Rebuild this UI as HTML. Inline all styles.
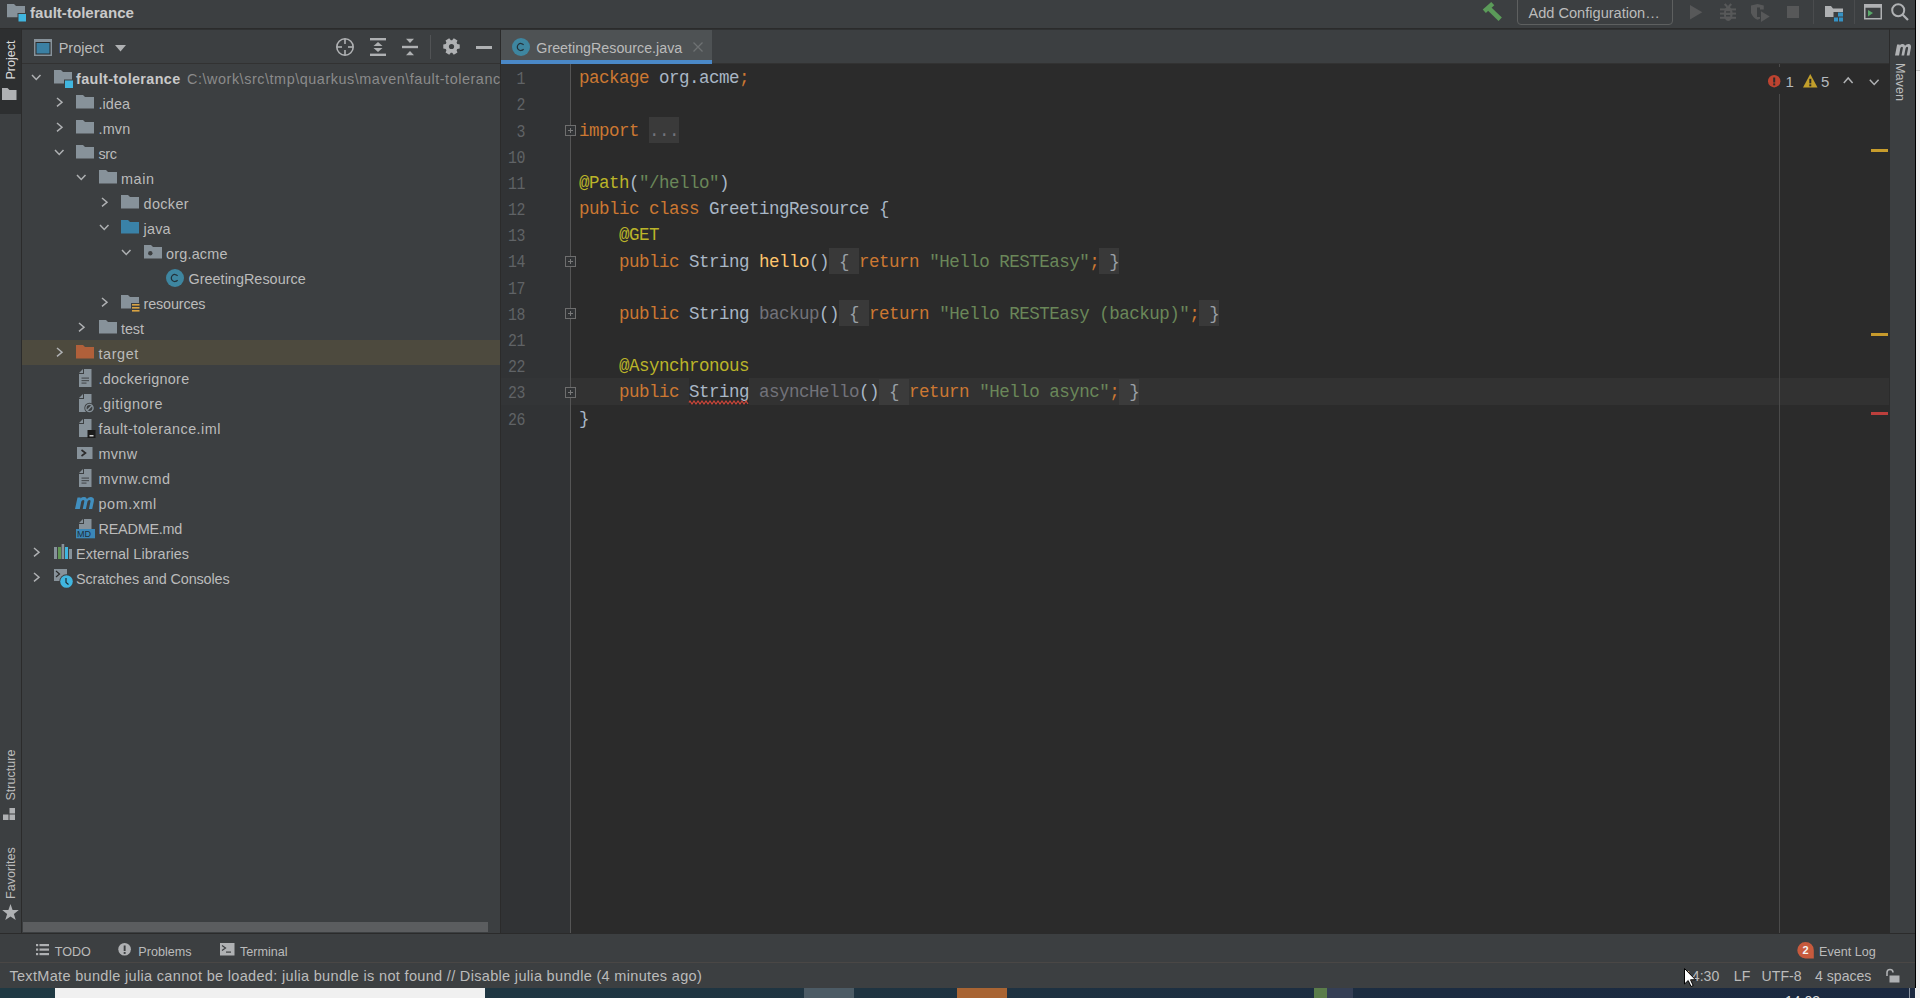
<!DOCTYPE html>
<html><head><meta charset="utf-8"><style>
*{margin:0;padding:0;box-sizing:border-box}
html,body{width:1920px;height:998px;overflow:hidden;background:#f0f0f0}
body{position:relative;font-family:"Liberation Sans",sans-serif;color:#bbbbbb}
.a{position:absolute}
.t{position:absolute;white-space:pre;line-height:1}
svg{position:absolute;overflow:visible}
.kw{color:#cc7832}.df{color:#a9b7c6}.st{color:#6a8759}.an{color:#bbb529}.md{color:#ffc66d}.un{color:#72737a}
.fb{color:#9aa0a6}
</style></head>
<body>
<div class="a" style="left:0px;top:0px;width:1915px;height:988px;background:#3c3f41;"></div>
<div class="a" style="left:1915px;top:0px;width:1px;height:988px;background:#000;"></div>
<div class="a" style="left:1916px;top:0px;width:4px;height:998px;background:#f0f0f0;"></div>
<div class="a" style="left:1916px;top:70px;width:4px;height:1px;background:#c8c8c8;"></div>
<div class="a" style="left:0px;top:988px;width:1915px;height:10px;background:linear-gradient(90deg,#1f3943 0%,#1f3441 45%,#1c2c41 75%,#1b2940 100%);"></div>
<div class="a" style="left:55px;top:988px;width:430px;height:10px;background:#f0f0f0;"></div>
<div class="a" style="left:804px;top:988px;width:50px;height:10px;background:#4c5b65;"></div>
<div class="a" style="left:957px;top:988px;width:50px;height:10px;background:#a86433;"></div>
<div class="a" style="left:1314px;top:988px;width:13px;height:10px;background:#5a7c4a;"></div>
<div class="a" style="left:1327px;top:988px;width:26px;height:10px;background:#353f55;"></div>
<div class="a" style="left:1909px;top:988px;width:1px;height:10px;background:#8a93a0;"></div>
<div class="t" style="left:1785.00px;top:994.15px;font-size:14px;color:#e0e0e0;font-family:'Liberation Sans',sans-serif;">14:03</div>
<div class="a" style="left:0px;top:28px;width:1915px;height:1px;background:#2b2b2b;"></div>
<div class="a" style="left:22px;top:29px;width:1893px;height:1px;background:#2f3132;"></div>
<svg style="left:7px;top:4.4px;" width="20" height="18" viewBox="0 0 20 18"><path d="M0,0 H7 L9,2 H18 V13.3 H0 Z" fill="#87929a"/><rect x="10.5" y="9" width="9" height="9" fill="#3c3f41"/><rect x="11.5" y="10" width="7.5" height="7.5" fill="#40b6e0"/></svg>
<div class="t" style="left:30.00px;top:5.12px;font-size:15.1px;color:#c9c9c9;font-family:'Liberation Sans',sans-serif;font-weight:bold">fault-tolerance</div>
<svg style="left:1478px;top:0px;" width="30" height="24" viewBox="0 0 30 24"><path d="M6.3,11.2 L14.8,3.6" stroke="#5b9b59" stroke-width="4.6"/><path d="M10.2,7.6 L22.2,19.3" stroke="#5b9b59" stroke-width="4.8"/></svg>
<div class="a" style="left:1516.5px;top:-4px;width:156px;height:29px;background:transparent;border:1px solid #5e6060;border-radius:4px"></div>
<div class="t" style="left:1528.50px;top:5.86px;font-size:14.58px;color:#bbbbbb;font-family:'Liberation Sans',sans-serif;">Add Configuration…</div>
<svg style="left:1690px;top:4.75px;" width="13" height="15" viewBox="0 0 13 15"><path d="M0,0 L12.3,7.3 L0,14.6 Z" fill="#575859"/></svg>
<svg style="left:1715px;top:0px;" width="24" height="24" viewBox="0 0 24 24"><g fill="#575859"><path d="M9.7,4 L12.5,7 M16.25,4 L13.5,7" stroke="#575859" stroke-width="2"/><ellipse cx="13.25" cy="13.8" rx="4.4" ry="7.2"/><rect x="5" y="8.4" width="16" height="2"/><rect x="5" y="12.6" width="16" height="2"/><rect x="5" y="16.8" width="16" height="2"/></g><rect x="11" y="11.2" width="4.2" height="1.5" fill="#3c3f41"/><rect x="11" y="15" width="4.2" height="1.5" fill="#3c3f41"/></svg>
<svg style="left:1750px;top:0px;" width="22" height="24" viewBox="0 0 22 24"><path d="M1,5.5 L7.5,4 L13.75,5.5 V9.5 H10 V7.5 H7 V17 H10 V18.8 L7.5,19.7 Q3,18 1,13 Z" fill="#575859"/><path d="M11,11.25 L19.7,16.6 L11,21.9 Z" fill="#575859"/></svg>
<div class="a" style="left:1787px;top:5.6px;width:12px;height:12.5px;background:#575859;"></div>
<div class="a" style="left:1813px;top:0px;width:1px;height:24px;background:#4a4c4e;"></div>
<svg style="left:1825px;top:5.6px;" width="18" height="16" viewBox="0 0 18 16"><path d="M0,0 H6 L8,2.5 H18 V11 H0 Z" fill="#afb1b3"/><rect x="8.5" y="6" width="9.5" height="10" fill="#3c3f41"/><g fill="#3592c4"><rect x="13" y="6.5" width="5" height="4"/><rect x="9" y="11.5" width="4" height="4"/><rect x="14" y="11.5" width="4" height="4"/></g></svg>
<div class="a" style="left:1854px;top:0px;width:1px;height:24px;background:#4a4c4e;"></div>
<svg style="left:1864px;top:4.4px;" width="18" height="16" viewBox="0 0 18 16"><rect x="0.75" y="0.75" width="16.5" height="14" fill="none" stroke="#afb1b3" stroke-width="1.5"/><rect x="0.75" y="0.75" width="16.5" height="3" fill="#afb1b3"/><path d="M4,6 L9,9 L4,12.5 Z" fill="#59a869"/></svg>
<svg style="left:1891px;top:2.75px;" width="19" height="18" viewBox="0 0 19 18"><circle cx="7.2" cy="7.2" r="6" fill="none" stroke="#afb1b3" stroke-width="2"/><path d="M11.5,11.5 L17,17" stroke="#afb1b3" stroke-width="2.2"/></svg>
<div class="a" style="left:21px;top:29px;width:1px;height:905px;background:#2b2b2b;"></div>
<div class="a" style="left:0px;top:29px;width:21px;height:85px;background:#2d2f30;"></div>
<div class="t" style="left:10.5px;top:60.2px;font-size:12.6px;color:#d8d8d8;transform:translate(-50%,-50%) rotate(-90deg)">Project</div>
<svg style="left:2px;top:87.5px;" width="15" height="12" viewBox="0 0 15 12"><path d="M0,0 H5.5 L7.5,2 H14.5 V12 H0 Z" fill="#afb1b3"/></svg>
<div class="t" style="left:10.9px;top:774.5px;font-size:12.6px;color:#bbbbbb;transform:translate(-50%,-50%) rotate(-90deg)">Structure</div>
<svg style="left:3.4px;top:807.6px;" width="13" height="12" viewBox="0 0 13 12"><g fill="#afb1b3"><rect x="6.5" y="0" width="5.5" height="5.5"/><rect x="0" y="6.5" width="5.5" height="5.5"/><rect x="6.5" y="6.5" width="5.5" height="5.5"/></g></svg>
<div class="t" style="left:10.9px;top:872.8px;font-size:12.6px;color:#bbbbbb;transform:translate(-50%,-50%) rotate(-90deg)">Favorites</div>
<svg style="left:1.5px;top:903.7px;" width="17" height="17" viewBox="0 0 17 17"><path d="M8.5,0 L10.6,5.9 L16.8,6.1 L11.9,9.9 L13.7,16 L8.5,12.4 L3.3,16 L5.1,9.9 L0.2,6.1 L6.4,5.9 Z" fill="#afb1b3"/></svg>
<div class="a" style="left:22px;top:63px;width:478px;height:1px;background:#323232;"></div>
<svg style="left:34px;top:39.3px;" width="18" height="17" viewBox="0 0 18 17"><rect x="0" y="0" width="18" height="17" fill="#87929a"/><rect x="1.5" y="3" width="15" height="12.5" fill="#2b2b2b"/><rect x="2.5" y="4" width="13" height="10.5" fill="#3b80a3"/></svg>
<div class="t" style="left:58.70px;top:40.53px;font-size:14.5px;color:#bbbbbb;font-family:'Liberation Sans',sans-serif;">Project</div>
<svg style="left:114.5px;top:45.1px;" width="11" height="7" viewBox="0 0 11 7"><path d="M0,0 H11 L5.5,6.6 Z" fill="#afb1b3"/></svg>
<svg style="left:336px;top:38px;" width="18" height="18" viewBox="0 0 18 18"><circle cx="9" cy="9" r="8.2" fill="none" stroke="#afb1b3" stroke-width="1.6"/><g stroke="#afb1b3" stroke-width="1.6"><path d="M9,1 V6"/><path d="M9,12 V17"/><path d="M1,9 H6"/><path d="M12,9 H17"/></g></svg>
<svg style="left:370px;top:38px;" width="16" height="18" viewBox="0 0 16 18"><g fill="#afb1b3"><rect x="0" y="0" width="16" height="2.4"/><rect x="0" y="15.6" width="16" height="2.4"/><path d="M3.5,8 L8,4 L12.5,8 Z"/><path d="M3.5,10 L8,14 L12.5,10 Z"/></g></svg>
<svg style="left:402px;top:38px;" width="16" height="18" viewBox="0 0 16 18"><g fill="#afb1b3"><rect x="0" y="7.8" width="16" height="2.4"/><path d="M4,0.8 H12 L8,5 Z"/><path d="M4,17.2 H12 L8,13 Z"/></g></svg>
<div class="a" style="left:430px;top:35px;width:1px;height:24px;background:#515355;"></div>
<svg style="left:442.5px;top:38px;" width="17" height="17" viewBox="0 0 17 17"><path d="M14.25,5.93 L16.73,6.38 L16.73,10.62 L14.25,11.07 L13.60,12.20 L14.45,14.57 L10.78,16.69 L9.15,14.77 L7.85,14.77 L6.22,16.69 L2.55,14.57 L3.40,12.20 L2.75,11.07 L0.27,10.62 L0.27,6.38 L2.75,5.93 L3.40,4.80 L2.55,2.43 L6.22,0.31 L7.85,2.23 L9.15,2.23 L10.78,0.31 L14.45,2.43 L13.60,4.80 Z" fill="#afb1b3"/><circle cx="8.5" cy="8.5" r="2.6" fill="#3c3f41"/></svg>
<div class="a" style="left:476px;top:45.5px;width:16px;height:3px;background:#afb1b3;"></div>
<svg style="left:31.25px;top:73.5px;" width="11" height="7" viewBox="0 0 11 7"><path d="M1,1 L5.25,5.5 L9.5,1" fill="none" stroke="#afb1b3" stroke-width="1.5"/></svg>
<svg style="left:54.0px;top:69.6px;" width="20" height="18" viewBox="0 0 20 18"><path d="M0,0 H7 L9,2 H18 V13.5 H0 Z" fill="#87929a"/><rect x="10" y="9.5" width="10" height="9" fill="#3c3f41"/><rect x="11" y="10.5" width="8" height="7.5" fill="#40b6e0"/></svg>
<div class="t" style="left:76.00px;top:71.91px;font-size:14.4px;color:#c9c9c9;font-family:'Liberation Sans',sans-serif;font-weight:bold;letter-spacing:0.36px">fault-tolerance</div>
<div class="a" style="left:187px;top:65.00px;width:313px;height:25px;overflow:hidden">
<div class="t" style="left:0.00px;top:6.91px;font-size:14.4px;color:#8b8b8b;font-family:'Liberation Sans',sans-serif;letter-spacing:0.55px">C:\work\src\tmp\quarkus\maven\fault-tolerance</div>
</div>
<svg style="left:55.5px;top:96.5px;" width="8" height="11" viewBox="0 0 8 11"><path d="M1,1 L6,5.2 L1,9.4" fill="none" stroke="#afb1b3" stroke-width="1.5"/></svg>
<svg style="left:76.0px;top:95px;" width="18" height="14" viewBox="0 0 18 14"><path d="M0,0 H7 L9,2 H18 V13.5 H0 Z" fill="#87929a"/></svg>
<div class="t" style="left:98.50px;top:96.91px;font-size:14.4px;color:#bbbbbb;font-family:'Liberation Sans',sans-serif;letter-spacing:0.07px">.idea</div>
<svg style="left:55.5px;top:121.5px;" width="8" height="11" viewBox="0 0 8 11"><path d="M1,1 L6,5.2 L1,9.4" fill="none" stroke="#afb1b3" stroke-width="1.5"/></svg>
<svg style="left:76.0px;top:120px;" width="18" height="14" viewBox="0 0 18 14"><path d="M0,0 H7 L9,2 H18 V13.5 H0 Z" fill="#87929a"/></svg>
<div class="t" style="left:98.50px;top:121.91px;font-size:14.4px;color:#bbbbbb;font-family:'Liberation Sans',sans-serif;letter-spacing:0.17px">.mvn</div>
<svg style="left:53.75px;top:148.5px;" width="11" height="7" viewBox="0 0 11 7"><path d="M1,1 L5.25,5.5 L9.5,1" fill="none" stroke="#afb1b3" stroke-width="1.5"/></svg>
<svg style="left:76.0px;top:145px;" width="18" height="14" viewBox="0 0 18 14"><path d="M0,0 H7 L9,2 H18 V13.5 H0 Z" fill="#87929a"/></svg>
<div class="t" style="left:98.50px;top:146.91px;font-size:14.4px;color:#bbbbbb;font-family:'Liberation Sans',sans-serif;letter-spacing:-0.40px">src</div>
<svg style="left:76.25px;top:173.5px;" width="11" height="7" viewBox="0 0 11 7"><path d="M1,1 L5.25,5.5 L9.5,1" fill="none" stroke="#afb1b3" stroke-width="1.5"/></svg>
<svg style="left:98.5px;top:170px;" width="18" height="14" viewBox="0 0 18 14"><path d="M0,0 H7 L9,2 H18 V13.5 H0 Z" fill="#87929a"/></svg>
<div class="t" style="left:121.00px;top:171.91px;font-size:14.4px;color:#bbbbbb;font-family:'Liberation Sans',sans-serif;letter-spacing:0.57px">main</div>
<svg style="left:100.5px;top:196.5px;" width="8" height="11" viewBox="0 0 8 11"><path d="M1,1 L6,5.2 L1,9.4" fill="none" stroke="#afb1b3" stroke-width="1.5"/></svg>
<svg style="left:121.0px;top:195px;" width="18" height="14" viewBox="0 0 18 14"><path d="M0,0 H7 L9,2 H18 V13.5 H0 Z" fill="#87929a"/></svg>
<div class="t" style="left:143.50px;top:196.91px;font-size:14.4px;color:#bbbbbb;font-family:'Liberation Sans',sans-serif;letter-spacing:0.38px">docker</div>
<svg style="left:98.75px;top:223.5px;" width="11" height="7" viewBox="0 0 11 7"><path d="M1,1 L5.25,5.5 L9.5,1" fill="none" stroke="#afb1b3" stroke-width="1.5"/></svg>
<svg style="left:121.0px;top:220px;" width="18" height="14" viewBox="0 0 18 14"><path d="M0,0 H7 L9,2 H18 V13.5 H0 Z" fill="#3a82a8"/></svg>
<div class="t" style="left:143.50px;top:221.91px;font-size:14.4px;color:#bbbbbb;font-family:'Liberation Sans',sans-serif;letter-spacing:0.23px">java</div>
<svg style="left:121.25px;top:248.5px;" width="11" height="7" viewBox="0 0 11 7"><path d="M1,1 L5.25,5.5 L9.5,1" fill="none" stroke="#afb1b3" stroke-width="1.5"/></svg>
<svg style="left:143.5px;top:245px;" width="18" height="14" viewBox="0 0 18 14"><path d="M0,0 H7 L9,2 H18 V13.5 H0 Z" fill="#87929a"/><circle cx="6.3" cy="8.2" r="2.2" fill="#3c3f41"/></svg>
<div class="t" style="left:166.00px;top:246.91px;font-size:14.4px;color:#bbbbbb;font-family:'Liberation Sans',sans-serif;letter-spacing:0.21px">org.acme</div>
<svg style="left:165.9px;top:268.9px;" width="18" height="18" viewBox="0 0 18 18"><circle cx="9" cy="9" r="9" fill="#3e86a0"/><path d="M11.6,6.9 A3.5,3.5 0 1 0 11.6,11.1" fill="none" stroke="#23323a" stroke-width="1.25"/></svg>
<div class="t" style="left:188.50px;top:271.91px;font-size:14.4px;color:#bbbbbb;font-family:'Liberation Sans',sans-serif;letter-spacing:0.03px">GreetingResource</div>
<svg style="left:100.5px;top:296.5px;" width="8" height="11" viewBox="0 0 8 11"><path d="M1,1 L6,5.2 L1,9.4" fill="none" stroke="#afb1b3" stroke-width="1.5"/></svg>
<svg style="left:121.0px;top:295px;" width="18" height="14" viewBox="0 0 18 14"><path d="M0,0 H7 L9,2 H18 V13.5 H0 Z" fill="#87929a"/><rect x="10" y="8" width="10" height="10" fill="#3c3f41"/><g fill="#d9a343"><rect x="11" y="9" width="7.5" height="1.6"/><rect x="11" y="12" width="7.5" height="1.6"/><rect x="11" y="15" width="7.5" height="1.6"/></g></svg>
<div class="t" style="left:143.50px;top:296.91px;font-size:14.4px;color:#bbbbbb;font-family:'Liberation Sans',sans-serif;letter-spacing:-0.14px">resources</div>
<svg style="left:78.0px;top:321.5px;" width="8" height="11" viewBox="0 0 8 11"><path d="M1,1 L6,5.2 L1,9.4" fill="none" stroke="#afb1b3" stroke-width="1.5"/></svg>
<svg style="left:98.5px;top:320px;" width="18" height="14" viewBox="0 0 18 14"><path d="M0,0 H7 L9,2 H18 V13.5 H0 Z" fill="#87929a"/></svg>
<div class="t" style="left:121.00px;top:321.91px;font-size:14.4px;color:#bbbbbb;font-family:'Liberation Sans',sans-serif;letter-spacing:-0.07px">test</div>
<div class="a" style="left:22px;top:340px;width:478px;height:25px;background:#4d4a3e;"></div>
<svg style="left:55.5px;top:346.5px;" width="8" height="11" viewBox="0 0 8 11"><path d="M1,1 L6,5.2 L1,9.4" fill="none" stroke="#afb1b3" stroke-width="1.5"/></svg>
<svg style="left:76.0px;top:345px;" width="18" height="14" viewBox="0 0 18 14"><path d="M0,0 H7 L9,2 H18 V13.5 H0 Z" fill="#b0603a"/></svg>
<div class="t" style="left:98.50px;top:346.91px;font-size:14.4px;color:#bbbbbb;font-family:'Liberation Sans',sans-serif;letter-spacing:0.60px">target</div>
<svg style="left:78.5px;top:369px;" width="13" height="18" viewBox="0 0 13 18"><path d="M5,0 H12.5 V18 H0 V5 H5 Z" fill="#87929a"/><path d="M0,4 L4,0 V4 Z" fill="#87929a"/><g fill="#4a4f52"><rect x="2.5" y="8.5" width="7.5" height="1.2"/><rect x="2.5" y="11" width="7.5" height="1.2"/><rect x="2.5" y="13.5" width="5" height="1.2"/></g></svg>
<div class="t" style="left:98.50px;top:371.91px;font-size:14.4px;color:#bbbbbb;font-family:'Liberation Sans',sans-serif;letter-spacing:0.29px">.dockerignore</div>
<svg style="left:78.5px;top:394px;" width="13" height="18" viewBox="0 0 13 18"><path d="M5,0 H12.5 V18 H0 V5 H5 Z" fill="#87929a"/><path d="M0,4 L4,0 V4 Z" fill="#87929a"/><circle cx="10.5" cy="14" r="5.2" fill="#3c3f41"/><circle cx="10.5" cy="14" r="3.6" fill="none" stroke="#87929a" stroke-width="1.4"/><path d="M8,16.5 L13,11.5" stroke="#87929a" stroke-width="1.4"/></svg>
<div class="t" style="left:98.50px;top:396.91px;font-size:14.4px;color:#bbbbbb;font-family:'Liberation Sans',sans-serif;letter-spacing:0.53px">.gitignore</div>
<svg style="left:78.5px;top:419px;" width="13" height="18" viewBox="0 0 13 18"><path d="M5,0 H12.5 V18 H0 V5 H5 Z" fill="#87929a"/><path d="M0,4 L4,0 V4 Z" fill="#87929a"/><rect x="8.5" y="11" width="8" height="8" fill="#1b1b1b"/><rect x="10.5" y="16" width="4" height="1.5" fill="#d0d0d0"/></svg>
<div class="t" style="left:98.50px;top:421.91px;font-size:14.4px;color:#bbbbbb;font-family:'Liberation Sans',sans-serif;letter-spacing:0.46px">fault-tolerance.iml</div>
<svg style="left:77.0px;top:446.5px;" width="16" height="12" viewBox="0 0 16 12"><rect x="0" y="0" width="15.5" height="12" fill="#87929a"/><path d="M4.5,3 L8.5,6 L4.5,9" fill="none" stroke="#2b2b2b" stroke-width="1.6"/></svg>
<div class="t" style="left:98.50px;top:446.91px;font-size:14.4px;color:#bbbbbb;font-family:'Liberation Sans',sans-serif;letter-spacing:0.33px">mvnw</div>
<svg style="left:78.5px;top:469px;" width="13" height="18" viewBox="0 0 13 18"><path d="M5,0 H12.5 V18 H0 V5 H5 Z" fill="#87929a"/><path d="M0,4 L4,0 V4 Z" fill="#87929a"/><g fill="#4a4f52"><rect x="2.5" y="8.5" width="7.5" height="1.2"/><rect x="2.5" y="11" width="7.5" height="1.2"/><rect x="2.5" y="13.5" width="5" height="1.2"/></g></svg>
<div class="t" style="left:98.50px;top:471.91px;font-size:14.4px;color:#bbbbbb;font-family:'Liberation Sans',sans-serif;letter-spacing:0.50px">mvnw.cmd</div>
<svg style="left:75.2px;top:496.9px;" width="19" height="12" viewBox="0 0 19 12"><path d="M0,12 L2.5,0.4 H5.6 L5.35,1.5 Q7,0 9.3,0.1 Q11.4,0.3 11.9,1.9 Q13.6,0 16.1,0.1 Q19.6,0.5 18.9,3.9 L17.2,12 H13.9 L15.5,4.6 Q15.9,2.9 14.5,2.9 Q13,2.9 12.5,4.6 L10.9,12 H7.7 L9.3,4.6 Q9.7,2.9 8.3,2.9 Q6.8,2.9 6.3,4.6 L4.8,12 Z" fill="#418fbf"/></svg>
<div class="t" style="left:98.50px;top:496.91px;font-size:14.4px;color:#bbbbbb;font-family:'Liberation Sans',sans-serif;letter-spacing:0.57px">pom.xml</div>
<svg style="left:78.5px;top:519px;" width="13" height="18" viewBox="0 0 13 18"><path d="M5,0 H12.5 V18 H0 V5 H5 Z" fill="#87929a"/><path d="M0,4 L4,0 V4 Z" fill="#87929a"/></svg>
<svg style="left:75.5px;top:528.6px;" width="19" height="10" viewBox="0 0 19 10"><rect x="0" y="0" width="19" height="9.3" fill="#3b87b8"/><text x="8" y="8.3" font-family="Liberation Sans" font-size="9" fill="#1f2f3a" text-anchor="middle">MD</text></svg>
<div class="t" style="left:98.50px;top:521.91px;font-size:14.4px;color:#bbbbbb;font-family:'Liberation Sans',sans-serif;letter-spacing:-0.21px">README.md</div>
<svg style="left:33.0px;top:546.5px;" width="8" height="11" viewBox="0 0 8 11"><path d="M1,1 L6,5.2 L1,9.4" fill="none" stroke="#afb1b3" stroke-width="1.5"/></svg>
<svg style="left:54.0px;top:544px;" width="19" height="16" viewBox="0 0 19 16"><g><rect x="0" y="3" width="3" height="12" fill="#87929a"/><rect x="4" y="3" width="3" height="12" fill="#629755"/><rect x="7.6" y="0" width="2.6" height="15" fill="#87929a"/><rect x="11" y="3" width="3" height="12" fill="#40b6e0"/><rect x="15" y="5" width="3" height="10" fill="#87929a"/></g></svg>
<div class="t" style="left:76.00px;top:546.91px;font-size:14.4px;color:#bbbbbb;font-family:'Liberation Sans',sans-serif;letter-spacing:0.06px">External Libraries</div>
<svg style="left:33.0px;top:571.5px;" width="8" height="11" viewBox="0 0 8 11"><path d="M1,1 L6,5.2 L1,9.4" fill="none" stroke="#afb1b3" stroke-width="1.5"/></svg>
<svg style="left:54.0px;top:569px;" width="20" height="20" viewBox="0 0 20 20"><rect x="0" y="0" width="13" height="12" fill="#87929a"/><path d="M2,2 L5.5,5 L2,8" fill="none" stroke="#2b2b2b" stroke-width="1.2"/><circle cx="12.5" cy="12.5" r="7.2" fill="#3c3f41"/><circle cx="12.5" cy="12.5" r="6.3" fill="#40b6e0"/><path d="M12,9 V13.5 L14.5,15.5" fill="none" stroke="#1e2a30" stroke-width="1.2"/></svg>
<div class="t" style="left:76.00px;top:571.91px;font-size:14.4px;color:#bbbbbb;font-family:'Liberation Sans',sans-serif;letter-spacing:-0.11px">Scratches and Consoles</div>
<div class="a" style="left:500px;top:64px;width:1px;height:870px;background:#2b2b2b;"></div>
<div class="a" style="left:22.5px;top:922px;width:465.5px;height:10px;background:#5b5d5f;"></div>
<div class="a" style="left:500px;top:29px;width:1px;height:35px;background:#2b2b2b;"></div>
<div class="a" style="left:501px;top:30px;width:211px;height:30px;background:#4e5254;"></div>
<div class="a" style="left:501px;top:60px;width:211px;height:4px;background:#4a88c7;"></div>
<svg style="left:512px;top:38px;" width="18" height="18" viewBox="0 0 18 18"><circle cx="9" cy="9" r="9" fill="#3e86a0"/><path d="M11.6,6.9 A3.5,3.5 0 1 0 11.6,11.1" fill="none" stroke="#23323a" stroke-width="1.25"/></svg>
<div class="t" style="left:536.30px;top:40.52px;font-size:14.27px;color:#bbbbbb;font-family:'Liberation Sans',sans-serif;">GreetingResource.java</div>
<svg style="left:693px;top:42.3px;" width="10" height="10" viewBox="0 0 10 10"><path d="M0.5,0.5 L9.5,9.5 M9.5,0.5 L0.5,9.5" stroke="#6e7173" stroke-width="1.3"/></svg>
<div class="a" style="left:712px;top:63px;width:1177px;height:1px;background:#323232;"></div>
<div class="a" style="left:501px;top:64px;width:69px;height:870px;background:#313335;"></div>
<div class="a" style="left:570px;top:64px;width:1px;height:870px;background:#555555;"></div>
<div class="a" style="left:571px;top:64px;width:1318px;height:870px;background:#2b2b2b;"></div>
<div class="a" style="left:1889px;top:29px;width:1px;height:905px;background:#2b2b2b;"></div>
<div class="a" style="left:501px;top:378.46px;width:69px;height:26.18px;background:#333537;"></div>
<div class="a" style="left:571px;top:378.46px;width:1318px;height:26.18px;background:#323232;"></div>
<div class="a" style="left:570px;top:378.46px;width:1px;height:26.18px;background:#555555;"></div>
<div class="a" style="left:1779px;top:64px;width:1px;height:2.5px;background:#4a4a4a;"></div>
<div class="a" style="left:1779px;top:94px;width:1px;height:840px;background:#4a4a4a;"></div>
<div class="t" style="left:515.00px;top:71.19px;font-size:17.5px;color:#606366;font-family:'Liberation Mono',monospace;letter-spacing:-0.5px;transform:scaleX(0.85);transform-origin:10px 0">1</div>
<div class="t" style="left:515.00px;top:97.37px;font-size:17.5px;color:#606366;font-family:'Liberation Mono',monospace;letter-spacing:-0.5px;transform:scaleX(0.85);transform-origin:10px 0">2</div>
<div class="t" style="left:515.00px;top:123.55px;font-size:17.5px;color:#606366;font-family:'Liberation Mono',monospace;letter-spacing:-0.5px;transform:scaleX(0.85);transform-origin:10px 0">3</div>
<div class="t" style="left:505.00px;top:149.73px;font-size:17.5px;color:#606366;font-family:'Liberation Mono',monospace;letter-spacing:-0.5px;transform:scaleX(0.85);transform-origin:20px 0">10</div>
<div class="t" style="left:505.00px;top:175.91px;font-size:17.5px;color:#606366;font-family:'Liberation Mono',monospace;letter-spacing:-0.5px;transform:scaleX(0.85);transform-origin:20px 0">11</div>
<div class="t" style="left:505.00px;top:202.09px;font-size:17.5px;color:#606366;font-family:'Liberation Mono',monospace;letter-spacing:-0.5px;transform:scaleX(0.85);transform-origin:20px 0">12</div>
<div class="t" style="left:505.00px;top:228.27px;font-size:17.5px;color:#606366;font-family:'Liberation Mono',monospace;letter-spacing:-0.5px;transform:scaleX(0.85);transform-origin:20px 0">13</div>
<div class="t" style="left:505.00px;top:254.45px;font-size:17.5px;color:#606366;font-family:'Liberation Mono',monospace;letter-spacing:-0.5px;transform:scaleX(0.85);transform-origin:20px 0">14</div>
<div class="t" style="left:505.00px;top:280.63px;font-size:17.5px;color:#606366;font-family:'Liberation Mono',monospace;letter-spacing:-0.5px;transform:scaleX(0.85);transform-origin:20px 0">17</div>
<div class="t" style="left:505.00px;top:306.81px;font-size:17.5px;color:#606366;font-family:'Liberation Mono',monospace;letter-spacing:-0.5px;transform:scaleX(0.85);transform-origin:20px 0">18</div>
<div class="t" style="left:505.00px;top:332.99px;font-size:17.5px;color:#606366;font-family:'Liberation Mono',monospace;letter-spacing:-0.5px;transform:scaleX(0.85);transform-origin:20px 0">21</div>
<div class="t" style="left:505.00px;top:359.17px;font-size:17.5px;color:#606366;font-family:'Liberation Mono',monospace;letter-spacing:-0.5px;transform:scaleX(0.85);transform-origin:20px 0">22</div>
<div class="t" style="left:505.00px;top:385.35px;font-size:17.5px;color:#606366;font-family:'Liberation Mono',monospace;letter-spacing:-0.5px;transform:scaleX(0.85);transform-origin:20px 0">23</div>
<div class="t" style="left:505.00px;top:411.53px;font-size:17.5px;color:#606366;font-family:'Liberation Mono',monospace;letter-spacing:-0.5px;transform:scaleX(0.85);transform-origin:20px 0">26</div>
<div class="a" style="left:649px;top:117.16px;width:30px;height:26px;background:#3a3a3a;"></div>
<div class="a" style="left:829px;top:248.06px;width:30px;height:26px;background:#393939;"></div>
<div class="a" style="left:1099px;top:248.06px;width:20px;height:26px;background:#393939;"></div>
<div class="a" style="left:839px;top:300.42px;width:30px;height:26px;background:#393939;"></div>
<div class="a" style="left:1199px;top:300.42px;width:20px;height:26px;background:#393939;"></div>
<div class="a" style="left:879px;top:378.96px;width:30px;height:26px;background:#3b3b3b;"></div>
<div class="a" style="left:1119px;top:378.96px;width:20px;height:26px;background:#3b3b3b;"></div>
<div class="a" style="left:689px;top:378.46px;width:60px;height:26.18px;background:#2b2b2b;"></div>
<div class="t" style="left:579.00px;top:70.29px;font-size:17.5px;color:#a9b7c6;font-family:'Liberation Mono',monospace;letter-spacing:-0.5px"><span class="kw">package</span><span class="df"> org.acme</span><span class="kw">;</span></div>
<div class="t" style="left:579.00px;top:122.65px;font-size:17.5px;color:#a9b7c6;font-family:'Liberation Mono',monospace;letter-spacing:-0.5px"><span class="kw">import</span><span class="df"> </span><span class="un">...</span></div>
<div class="t" style="left:579.00px;top:175.01px;font-size:17.5px;color:#a9b7c6;font-family:'Liberation Mono',monospace;letter-spacing:-0.5px"><span class="an">@Path</span><span class="df">(</span><span class="st">&quot;/hello&quot;</span><span class="df">)</span></div>
<div class="t" style="left:579.00px;top:201.19px;font-size:17.5px;color:#a9b7c6;font-family:'Liberation Mono',monospace;letter-spacing:-0.5px"><span class="kw">public class</span><span class="df"> GreetingResource {</span></div>
<div class="t" style="left:579.00px;top:227.37px;font-size:17.5px;color:#a9b7c6;font-family:'Liberation Mono',monospace;letter-spacing:-0.5px"><span class="df">    </span><span class="an">@GET</span></div>
<div class="t" style="left:579.00px;top:253.55px;font-size:17.5px;color:#a9b7c6;font-family:'Liberation Mono',monospace;letter-spacing:-0.5px"><span class="df">    </span><span class="kw">public</span><span class="df"> String </span><span class="md">hello</span><span class="df">()</span><span class="fb"> { </span><span class="kw">return</span><span class="df"> </span><span class="st">&quot;Hello RESTEasy&quot;</span><span class="kw">;</span><span class="fb"> }</span></div>
<div class="t" style="left:579.00px;top:305.91px;font-size:17.5px;color:#a9b7c6;font-family:'Liberation Mono',monospace;letter-spacing:-0.5px"><span class="df">    </span><span class="kw">public</span><span class="df"> String </span><span class="un">backup</span><span class="df">()</span><span class="fb"> { </span><span class="kw">return</span><span class="df"> </span><span class="st">&quot;Hello RESTEasy (backup)&quot;</span><span class="kw">;</span><span class="fb"> }</span></div>
<div class="t" style="left:579.00px;top:358.27px;font-size:17.5px;color:#a9b7c6;font-family:'Liberation Mono',monospace;letter-spacing:-0.5px"><span class="df">    </span><span class="an">@Asynchronous</span></div>
<div class="t" style="left:579.00px;top:384.45px;font-size:17.5px;color:#a9b7c6;font-family:'Liberation Mono',monospace;letter-spacing:-0.5px"><span class="df">    </span><span class="kw">public</span><span class="df"> String </span><span class="un">asyncHello</span><span class="df">()</span><span class="fb"> { </span><span class="kw">return</span><span class="df"> </span><span class="st">&quot;Hello async&quot;</span><span class="kw">;</span><span class="fb"> }</span></div>
<div class="t" style="left:579.00px;top:410.63px;font-size:17.5px;color:#a9b7c6;font-family:'Liberation Mono',monospace;letter-spacing:-0.5px"><span class="df">}</span></div>
<svg style="left:689px;top:401.35999999999996px;" width="60" height="4" viewBox="0 0 60 4"><path d="M0,1.5 L1,0 L3,3 L5,0 L7,3 L9,0 L11,3 L13,0 L15,3 L17,0 L19,3 L21,0 L23,3 L25,0 L27,3 L29,0 L31,3 L33,0 L35,3 L37,0 L39,3 L41,0 L43,3 L45,0 L47,3 L49,0 L51,3 L53,0 L55,3 L57,0 L59,3" fill="none" stroke="#d2473a" stroke-width="1.2"/></svg>
<svg style="left:565px;top:125.16px;" width="11" height="11" viewBox="0 0 11 11"><rect x="0.5" y="0.5" width="10" height="10" fill="#313335" stroke="#6e6e6e" stroke-width="1"/><path d="M3,5.5 H8 M5.5,3 V8" stroke="#7a7a7a" stroke-width="1"/></svg>
<svg style="left:565px;top:256.06px;" width="11" height="11" viewBox="0 0 11 11"><rect x="0.5" y="0.5" width="10" height="10" fill="#313335" stroke="#6e6e6e" stroke-width="1"/><path d="M3,5.5 H8 M5.5,3 V8" stroke="#7a7a7a" stroke-width="1"/></svg>
<svg style="left:565px;top:308.42px;" width="11" height="11" viewBox="0 0 11 11"><rect x="0.5" y="0.5" width="10" height="10" fill="#313335" stroke="#6e6e6e" stroke-width="1"/><path d="M3,5.5 H8 M5.5,3 V8" stroke="#7a7a7a" stroke-width="1"/></svg>
<svg style="left:565px;top:386.96px;" width="11" height="11" viewBox="0 0 11 11"><rect x="0.5" y="0.5" width="10" height="10" fill="#313335" stroke="#6e6e6e" stroke-width="1"/><path d="M3,5.5 H8 M5.5,3 V8" stroke="#7a7a7a" stroke-width="1"/></svg>
<svg style="left:1768px;top:74.8px;" width="13" height="13" viewBox="0 0 13 13"><circle cx="6.2" cy="6.2" r="6.2" fill="#bd4330"/><rect x="5.2" y="2.5" width="2" height="5" fill="#2b2b2b"/><rect x="5.2" y="8.4" width="2" height="2" fill="#2b2b2b"/></svg>
<div class="t" style="left:1785.50px;top:74.30px;font-size:15px;color:#b4b9be;font-family:'Liberation Sans',sans-serif;">1</div>
<svg style="left:1802.7px;top:73.8px;" width="15" height="14" viewBox="0 0 15 14"><path d="M7.25,0 L14.5,13.6 H0 Z" fill="#c29f2b"/><rect x="6.3" y="4.8" width="2" height="4.6" fill="#2b2b2b"/><rect x="6.3" y="10.3" width="2" height="2" fill="#2b2b2b"/></svg>
<div class="t" style="left:1821.00px;top:74.30px;font-size:15px;color:#b4b9be;font-family:'Liberation Sans',sans-serif;">5</div>
<svg style="left:1843px;top:77.2px;" width="11" height="7" viewBox="0 0 11 7"><path d="M0.8,6 L5.2,1 L9.6,6" fill="none" stroke="#afb1b3" stroke-width="1.5"/></svg>
<svg style="left:1868.7px;top:78.6px;" width="11" height="7" viewBox="0 0 11 7"><path d="M0.8,0.8 L5.2,5.5 L9.6,0.8" fill="none" stroke="#afb1b3" stroke-width="1.5"/></svg>
<div class="a" style="left:1871px;top:149px;width:17px;height:3px;background:#c79c2c;"></div>
<div class="a" style="left:1871px;top:333px;width:17px;height:3px;background:#c79a2c;"></div>
<div class="a" style="left:1871px;top:412px;width:17px;height:3px;background:#bc3f3c;"></div>
<svg style="left:1895px;top:43.5px" width="16" height="11.5" viewBox="0 0 19 12" preserveAspectRatio="none"><path d="M0,12 L2.5,0.4 H5.6 L5.35,1.5 Q7,0 9.3,0.1 Q11.4,0.3 11.9,1.9 Q13.6,0 16.1,0.1 Q19.6,0.5 18.9,3.9 L17.2,12 H13.9 L15.5,4.6 Q15.9,2.9 14.5,2.9 Q13,2.9 12.5,4.6 L10.9,12 H7.7 L9.3,4.6 Q9.7,2.9 8.3,2.9 Q6.8,2.9 6.3,4.6 L4.8,12 Z" fill="#afb1b3"/></svg>
<div class="t" style="left:1899.9px;top:82.3px;font-size:12.6px;color:#bbbbbb;transform:translate(-50%,-50%) rotate(90deg)">Maven</div>
<div class="a" style="left:0px;top:933px;width:1915px;height:1px;background:#2b2b2b;"></div>
<svg style="left:36px;top:943.75px;" width="14" height="12" viewBox="0 0 14 12"><g fill="#afb1b3"><rect x="0" y="0" width="2.2" height="2.2"/><rect x="0" y="4.5" width="2.2" height="2.2"/><rect x="0" y="9" width="2.2" height="2.2"/><rect x="3.5" y="0" width="9.5" height="2.2"/><rect x="3.5" y="4.5" width="9.5" height="2.2"/><rect x="3.5" y="9" width="9.5" height="2.2"/></g></svg>
<div class="t" style="left:54.70px;top:945.63px;font-size:12.6px;color:#bbbbbb;font-family:'Liberation Sans',sans-serif;">TODO</div>
<svg style="left:118px;top:943px;" width="14" height="13" viewBox="0 0 14 13"><circle cx="6.6" cy="6.3" r="6.3" fill="#afb1b3"/><rect x="5.7" y="2.5" width="1.9" height="5.5" fill="#3c3f41"/><rect x="5.7" y="9" width="1.9" height="1.9" fill="#3c3f41"/></svg>
<div class="t" style="left:138.30px;top:945.63px;font-size:12.6px;color:#bbbbbb;font-family:'Liberation Sans',sans-serif;">Problems</div>
<svg style="left:219.5px;top:943px;" width="15" height="13" viewBox="0 0 15 13"><rect x="0" y="0" width="14.5" height="12.5" fill="#afb1b3"/><path d="M2,2.5 L5.5,5 L2,7.5" fill="none" stroke="#3c3f41" stroke-width="1.2"/><rect x="6" y="8.5" width="5" height="1.2" fill="#3c3f41"/></svg>
<div class="t" style="left:240.00px;top:945.63px;font-size:12.6px;color:#bbbbbb;font-family:'Liberation Sans',sans-serif;">Terminal</div>
<svg style="left:1797px;top:942px;" width="17" height="17" viewBox="0 0 17 17"><path d="M8.5,0 A8.2,8.2 0 1 0 8.5,16.4 H16.8 V8.2 A8.2,8.2 0 0 0 8.5,0 Z" fill="#c75a3d"/><text x="8.6" y="12.3" font-family="Liberation Sans" font-weight="bold" font-size="11" fill="#f4f4f4" text-anchor="middle">2</text></svg>
<div class="t" style="left:1819.00px;top:945.93px;font-size:12.6px;color:#bbbbbb;font-family:'Liberation Sans',sans-serif;">Event Log</div>
<div class="a" style="left:0px;top:962px;width:1915px;height:1px;background:#4a4745;"></div>
<div class="t" style="left:9.40px;top:968.93px;font-size:14.5px;color:#bbbbbb;font-family:'Liberation Sans',sans-serif;letter-spacing:0.325px">TextMate bundle julia cannot be loaded: julia bundle is not found // Disable julia bundle (4 minutes ago)</div>
<div class="t" style="left:1684.00px;top:969.26px;font-size:14.1px;color:#bbbbbb;font-family:'Liberation Sans',sans-serif;">14:30</div>
<div class="t" style="left:1733.80px;top:969.26px;font-size:14.1px;color:#bbbbbb;font-family:'Liberation Sans',sans-serif;">LF</div>
<div class="t" style="left:1761.60px;top:969.26px;font-size:14.1px;color:#bbbbbb;font-family:'Liberation Sans',sans-serif;">UTF-8</div>
<div class="t" style="left:1815.00px;top:969.26px;font-size:14.1px;color:#bbbbbb;font-family:'Liberation Sans',sans-serif;">4 spaces</div>
<svg style="left:1885px;top:969px;" width="15" height="14" viewBox="0 0 15 14"><path d="M2,7 V3.5 A3,3 0 0 1 8,3.5" fill="none" stroke="#afb1b3" stroke-width="1.6"/><rect x="4.5" y="6.5" width="10" height="7" fill="#afb1b3"/></svg>
<svg style="left:1684px;top:967.5px;" width="13" height="20" viewBox="0 0 13 20"><path d="M0.5,0.5 L0.5,16 L4.2,12.5 L7,18.5 L9.2,17.5 L6.5,11.8 L11.5,11.8 Z" fill="#ffffff" stroke="#000" stroke-width="1"/></svg>
</body></html>
